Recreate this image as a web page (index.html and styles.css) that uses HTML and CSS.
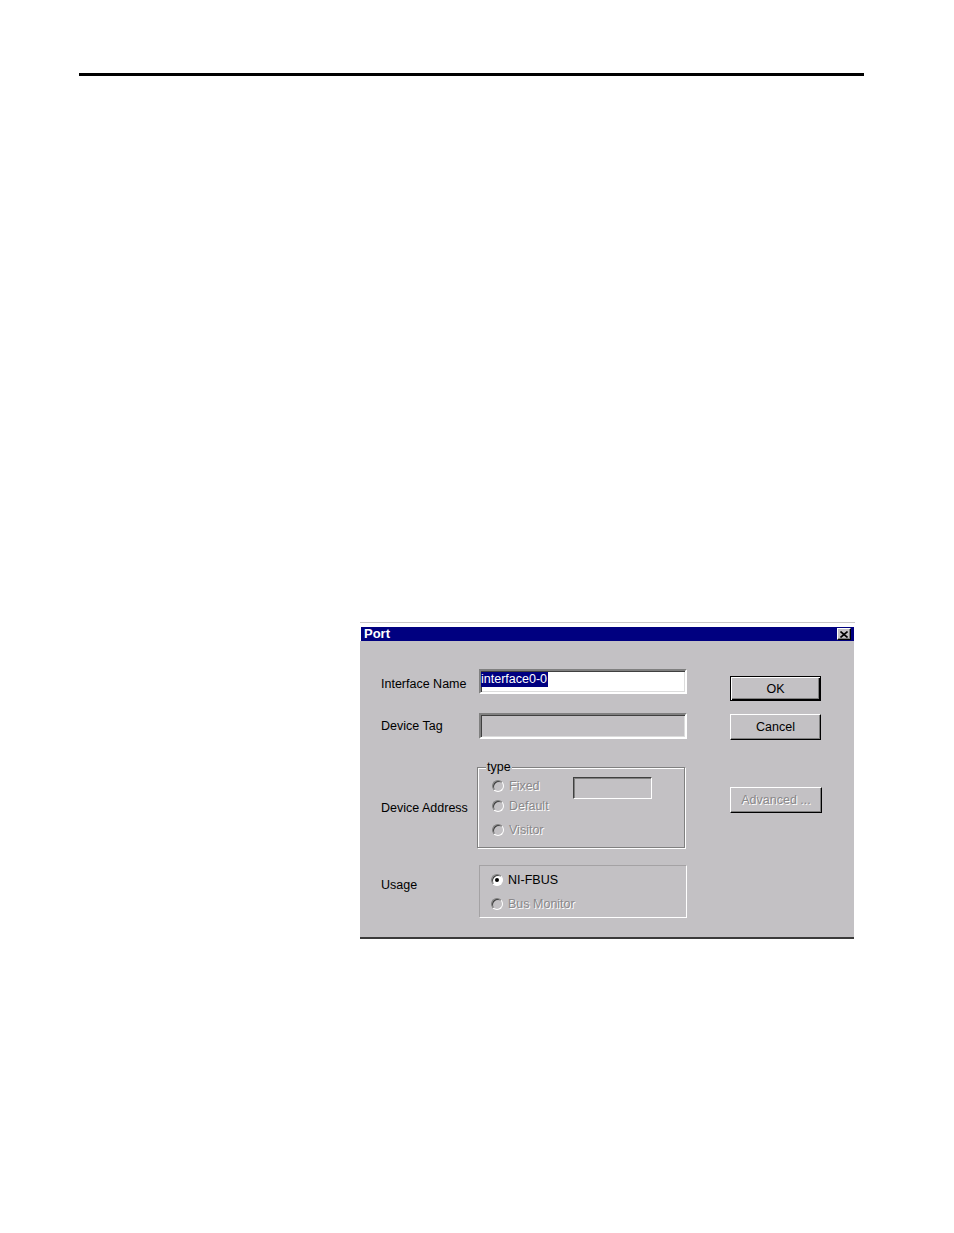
FILE: index.html
```html
<!DOCTYPE html>
<html>
<head>
<meta charset="utf-8">
<title>Port</title>
<link rel="stylesheet" href="styles.css">
</head>
<body>
<div class="page">
  <div class="rule"></div>
  <div class="dialog">
    <div class="titlebar">
      <span class="title">Port</span>
      <span class="close"><svg width="8" height="7" viewBox="0 0 8 7"><path d="M0.5 0.5 L7.5 6.5 M7.5 0.5 L0.5 6.5" stroke="#000" stroke-width="1.6"/></svg></span>
    </div>
    <div class="body">
      <div class="form">
        <div class="row r1">
          <span class="label l1">Interface Name</span>
          <div class="input"><span class="sel">interface0-0</span></div>
        </div>
        <div class="row r2">
          <span class="label">Device Tag</span>
          <div class="input disabled"></div>
        </div>
        <div class="row r3">
          <span class="label">Device Address</span>
          <div class="group">
            <span class="legend">type</span>
            <div class="opt">
              <span class="radio"></span><span class="optlabel dis w">Fixed</span>
              <div class="smallbox"></div>
            </div>
            <div class="opt o2">
              <span class="radio"></span><span class="optlabel dis">Default</span>
            </div>
            <div class="opt o3">
              <span class="radio"></span><span class="optlabel dis">Visitor</span>
            </div>
          </div>
        </div>
        <div class="row r4">
          <span class="label lusage">Usage</span>
          <div class="usage">
            <div class="opt">
              <span class="radio on checked"></span><span class="optlabel">NI-FBUS</span>
            </div>
            <div class="opt o3">
              <span class="radio"></span><span class="optlabel dis">Bus Monitor</span>
            </div>
          </div>
        </div>
      </div>
      <div class="buttons">
        <div class="btn default b1"><span class="btn-inner">OK</span></div>
        <div class="btn b2"><span class="btn-inner">Cancel</span></div>
        <div class="btn b3"><span class="btn-inner dis">Advanced ...</span></div>
      </div>
    </div>
  </div>
</div>
</body>
</html>
```

FILE: styles.css
```css
html, body {
  margin: 0;
  padding: 0;
  background: #fff;
}

.page {
  width: 954px;
  height: 1233px;
  font-family: "Liberation Sans", Arial, sans-serif;
  font-size: 12.5px;
  color: #000;
  overflow: hidden;
  padding-top: 73px;
  box-sizing: border-box;
}

.rule {
  margin-left: 79px;
  width: 785px;
  height: 3px;
  background: #000;
}

.dialog {
  margin-top: 546px;
  margin-left: 360px;
  width: 495px;
  border-top: 1px solid #c8c6c8;
  padding-top: 4px;
}

.titlebar {
  margin-left: 1px;
  width: 493px;
  height: 14px;
  background: #000080;
  display: flex;
  align-items: center;
  justify-content: space-between;
  padding: 0 3px;
  box-sizing: border-box;
}

.title {
  color: #fff;
  font-weight: bold;
  font-size: 13px;
  line-height: 14px;
}

.close {
  width: 14px;
  height: 12px;
  box-sizing: border-box;
  background: #c3c1c4;
  border-top: 1px solid #fff;
  border-left: 1px solid #fff;
  border-right: 1px solid #000;
  border-bottom: 1px solid #000;
  box-shadow: inset -1px -1px 0 #808080;
  display: flex;
  align-items: center;
  justify-content: center;
}

.close svg {
  display: block;
}

.body {
  width: 494px;
  height: 298px;
  box-sizing: border-box;
  background: #c3c1c4;
  border-bottom: 2px solid #3a3a3a;
  display: flex;
  padding: 28px 0 0 21px;
}

.form {
  display: flex;
  flex-direction: column;
  width: 306px;
}

.row {
  display: flex;
  align-items: center;
}

.label {
  width: 98px;
  flex: none;
  line-height: 14px;
  white-space: nowrap;
}

.l1 {
  margin-top: 4px;
}

.r2 {
  margin-top: 19px;
}

.r3 {
  margin-top: 28px;
}

.r4 {
  margin-top: 17px;
  align-items: flex-start;
}

.lusage {
  margin-top: 13px;
}

.input {
  width: 208px;
  height: 25px;
  box-sizing: border-box;
  background: #fff;
  border: 2px solid;
  border-color: #808080 #fff #fff #808080;
  box-shadow: inset 1px 1px 0 #404040, inset -1px -1px 0 #dcdcdc;
  padding: 1px 0 0 0;
}

.input.disabled {
  height: 26px;
  background: #c3c1c4;
}

.sel {
  display: inline-block;
  background: #000080;
  color: #fff;
  line-height: 15px;
  padding-right: 1px;
}

.group {
  position: relative;
  margin-left: -2px;
  width: 208px;
  height: 81px;
  box-sizing: border-box;
  border: 1px solid #808080;
  box-shadow: inset 1px 1px 0 #fff, 1px 1px 0 #fff;
  padding: 11px 0 0 14px;
}

.legend {
  position: absolute;
  top: -8px;
  left: 8px;
  background: #c3c1c4;
  padding: 0 1px;
  line-height: 14px;
}

.opt {
  display: flex;
  align-items: center;
  height: 14px;
}

.o2 {
  margin-top: 6px;
}

.o3 {
  margin-top: 10px;
}

.radio {
  flex: none;
  width: 12px;
  height: 12px;
  box-sizing: border-box;
  border-radius: 50%;
  border: 1px solid;
  border-color: #808080 #fff #fff #808080;
  box-shadow: inset 1px 1px 0 #404040;
  margin-right: 5px;
  position: relative;
}

.radio.on {
  background: #fff;
}

.radio.checked::after {
  content: "";
  position: absolute;
  left: 3px;
  top: 3px;
  width: 4px;
  height: 4px;
  border-radius: 50%;
  background: #000;
}

.optlabel {
  line-height: 14px;
  white-space: nowrap;
}

.optlabel.w {
  width: 64px;
}

.dis {
  color: #8a888a;
  text-shadow: 1px 1px 0 #fff;
}

.smallbox {
  align-self: flex-start;
  margin-top: -2px;
  margin-bottom: -6px;
  width: 79px;
  height: 22px;
  box-sizing: border-box;
  border: 1px solid;
  border-color: #404040 #fff #fff #404040;
  box-shadow: inset 1px 1px 0 #808080;
}

.usage {
  width: 208px;
  height: 53px;
  box-sizing: border-box;
  border: 1px solid;
  border-color: #a4a2a4 #fff #fff #a4a2a4;
  padding: 7px 0 0 11px;
}

.buttons {
  margin-left: 43px;
  display: flex;
  flex-direction: column;
}

.btn {
  width: 91px;
  height: 26px;
  box-sizing: border-box;
  background: #c3c1c4;
  border-top: 1px solid #fff;
  border-left: 1px solid #fff;
  border-right: 1px solid #000;
  border-bottom: 1px solid #000;
  box-shadow: inset -1px -1px 0 #808080;
  display: flex;
  align-items: center;
  justify-content: center;
}

.btn-inner {
  line-height: 14px;
}

.btn.default {
  border: 1px solid #000;
  box-shadow: inset 1px 1px 0 #fff, inset -1px -1px 0 #000, inset -2px -2px 0 #808080;
}

.b1 {
  margin-top: 7px;
  height: 25px;
}

.b2 {
  margin-top: 13px;
}

.b3 {
  margin-top: 47px;
  width: 92px;
}
```
